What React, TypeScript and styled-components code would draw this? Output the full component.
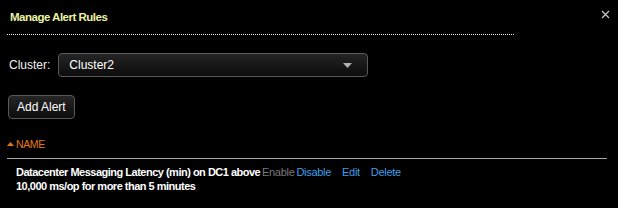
import React from 'react';
import styled, {createGlobalStyle} from 'styled-components';

const GlobalStyle = createGlobalStyle`
  html, body {
    margin: 0;
    padding: 0;
    background: #000;
  }
  body {
    font-family: 'Liberation Sans', Arial, sans-serif;
    color: #fff;
  }
`;

type Alert = {
  id: number;
  name: string;
  detail: string;
  enabled: boolean;
};

const alerts: Alert[] = [
  {
    id: 1,
    name: 'Datacenter Messaging Latency (min) on DC1 above',
    detail: '10,000 ms/op for more than 5 minutes',
    enabled: true,
  },
];

export default function App() {
  return (
    <>
      <GlobalStyle />
      <Dialog>
        <Header>
          <Title>Manage Alert Rules</Title>
          <CloseButton aria-label="close">
            <svg width="9" height="9" viewBox="0 0 9 9">
              <path d="M1 1L8 8M8 1L1 8" stroke="#c8c8c8" strokeWidth="1.2" />
            </svg>
          </CloseButton>
        </Header>
        <Body>
          <FieldRow>
            <Label>Cluster:</Label>
            <Select>
              <span>Cluster2</span>
              <svg width="9" height="5" viewBox="0 0 9 5">
                <path d="M0 0H9L4.5 5Z" fill="#b0b0b0" />
              </svg>
            </Select>
          </FieldRow>
          <Button>Add Alert</Button>
          <Table>
            <HeadRow>
              <HeadCell>
                <svg width="7" height="4" viewBox="0 0 7 4">
                  <path d="M0 4H7L3.5 0Z" fill="#e07b12" />
                </svg>
                NAME
              </HeadCell>
            </HeadRow>
            {alerts.map((a) => (
              <AlertRow key={a.id}>
                <AlertName>
                  {a.name}
                  <br />
                  {a.detail}
                </AlertName>
                <Actions>
                  <Action disabled={a.enabled}>Enable</Action>
                  <Action disabled={!a.enabled} $wide>
                    Disable
                  </Action>
                  <Action $wide>Edit</Action>
                  <Action>Delete</Action>
                </Actions>
              </AlertRow>
            ))}
          </Table>
        </Body>
      </Dialog>
    </>
  );
}

const Dialog = styled.div`
  width: 618px;
  height: 208px;
  background: #000;
  box-sizing: border-box;
`;

const Header = styled.div`
  position: relative;
  display: flex;
  align-items: center;
  height: 34px;
  margin: 0 104px 0 7px;
  border-bottom: 1px dotted #e8e8e8;
`;

const Title = styled.h1`
  margin: 0 0 0 3px;
  font-size: 11.5px;
  font-weight: bold;
  letter-spacing: -0.5px;
  color: #eaf3a0;
`;

const CloseButton = styled.button`
  position: absolute;
  right: -96px;
  top: 10px;
  padding: 0;
  border: none;
  background: none;
  line-height: 0;
`;

const Body = styled.div`
  padding: 18px 11px 0 7px;
`;

const FieldRow = styled.div`
  display: flex;
  align-items: center;
  gap: 8px;
  padding-left: 2px;
`;

const Label = styled.span`
  font-size: 12px;
  color: #f0f0f0;
`;

const Select = styled.div`
  display: flex;
  align-items: center;
  justify-content: space-between;
  box-sizing: border-box;
  width: 310px;
  height: 24px;
  padding: 0 15px 0 10px;
  border: 1px solid #5a5a5a;
  border-radius: 4px;
  background: linear-gradient(#242424, #0c0c0c);
  font-size: 12px;
  color: #fff;
`;

const Button = styled.button`
  display: block;
  box-sizing: border-box;
  height: 24px;
  margin: 18px 0 0 1px;
  padding: 0 8px;
  border: 1px solid #5a5a5a;
  border-radius: 4px;
  background: linear-gradient(#262626, #0c0c0c);
  font-family: 'Liberation Sans', Arial, sans-serif;
  font-size: 12px;
  color: #fff;
`;

const Table = styled.div`
  margin-top: 16px;
`;

const HeadRow = styled.div`
  box-sizing: border-box;
  display: flex;
  align-items: center;
  height: 24px;
  padding-bottom: 6px;
  border-bottom: 1px solid #a8a8a8;
`;

const HeadCell = styled.div`
  display: flex;
  align-items: center;
  gap: 2px;
  font-size: 10.5px;
  letter-spacing: -0.4px;
  color: #e07b12;
`;

const AlertRow = styled.div`
  display: flex;
  align-items: flex-start;
  padding: 6px 0 0 9px;
  font-size: 11px;
  line-height: 14px;
`;

const AlertName = styled.div`
  width: 246px;
  white-space: nowrap;
  font-weight: bold;
  letter-spacing: -0.5px;
  color: #fff;
`;

const Actions = styled.div`
  display: flex;
  letter-spacing: -0.3px;
`;

const Action = styled.span<{disabled?: boolean; $wide?: boolean}>`
  color: ${(p) => (p.disabled ? '#7a7a7a' : '#3d9fe6')};
  margin-right: ${(p) => (p.$wide ? '11px' : '2px')};
`;
